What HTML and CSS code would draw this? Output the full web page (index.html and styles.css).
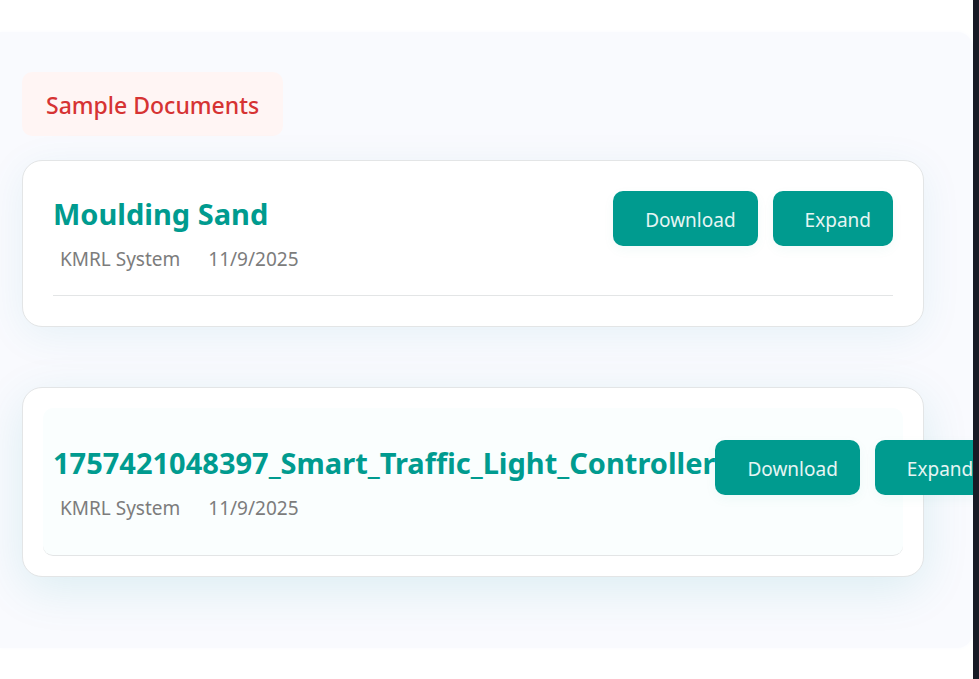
FILE: index.html
```
<!DOCTYPE html>
<html lang="en">
<head>
<meta charset="utf-8">
<title>Sample Documents</title>
<link rel="stylesheet" href="styles.css">
</head>
<body>
<main class="page">
  <section class="documents">
    <h2 class="section-title">Sample Documents</h2>
    <article class="card">
      <header class="card-header">
        <div class="info">
          <h3 class="title">Moulding Sand</h3>
          <p class="meta"><span>KMRL System</span><time datetime="2025-09-11">11/9/2025</time></p>
        </div>
        <div class="actions">
          <button class="button" type="button">Download</button>
          <button class="button" type="button">Expand</button>
        </div>
      </header>
    </article>
    <article class="card card-active">
      <header class="card-header">
        <div class="info">
          <h3 class="title">1757421048397_Smart_Traffic_Light_Controller</h3>
          <p class="meta"><span>KMRL System</span><time datetime="2025-09-11">11/9/2025</time></p>
        </div>
        <div class="actions">
          <button class="button" type="button">Download</button>
          <button class="button" type="button">Expand</button>
        </div>
      </header>
    </article>
  </section>
</main>
</body>
</html>
```
FILE: styles.css
```
* {
  box-sizing: border-box;
}

body {
  margin: 0;
  min-height: 100vh;
  display: flex;
  background: #fff;
  border-right: 6px solid #181b26;
  font-family: "Segoe UI", "Noto Sans", "Open Sans", sans-serif;
}

.page {
  flex: 1;
  min-width: 0;
  padding: 32px 0;
  overflow: hidden;
}

.documents {
  padding: 40px 49px 71px 22px;
  border-radius: 0 16px 16px 0;
  background: #f9fafe;
  box-shadow: 0 0 4px #f9fafe;
}

.section-title {
  width: fit-content;
  margin: 0 0 24px;
  padding: 17px 24px 15px;
  border-radius: 10px;
  background: #fff5f4;
  color: #d63333;
  font-size: 23px;
  font-weight: 500;
  line-height: 32px;
}

.card {
  padding: 30px;
  border: 1px solid #e3e5e6;
  border-radius: 20px;
  background: #fff;
  box-shadow: 0 8px 40px rgba(0, 145, 160, 0.08);
}

.card + .card {
  margin-top: 60px;
}

.card-active {
  padding: 20px;
  box-shadow: 0 12px 48px rgba(0, 145, 160, 0.12);
}

.card-header {
  display: flex;
  justify-content: space-between;
  align-items: flex-start;
  padding-bottom: 22px;
  border-bottom: 1px solid #e3e5e6;
}

.card-active .card-header {
  padding: 32px 10px 33px;
  border-radius: 10px;
  background: #fafefe;
}

.title {
  margin: 0 0 8px;
  color: #009b8f;
  font-size: 29px;
  font-weight: 700;
  line-height: 46px;
}

.meta {
  display: flex;
  gap: 28px;
  margin: 0;
  padding-left: 7px;
  color: #7c7c7c;
  font-size: 19px;
  line-height: 28px;
}

.actions {
  display: flex;
  flex-shrink: 0;
  gap: 15px;
}

.button {
  padding: 15px 22px 12px 32px;
  border: 0;
  border-radius: 10px;
  background: #009b8f;
  box-shadow: 0 4px 12px rgba(0, 155, 143, 0.05);
  color: #e6f5f4;
  font: inherit;
  font-size: 19px;
  line-height: 28px;
  cursor: pointer;
}
```
